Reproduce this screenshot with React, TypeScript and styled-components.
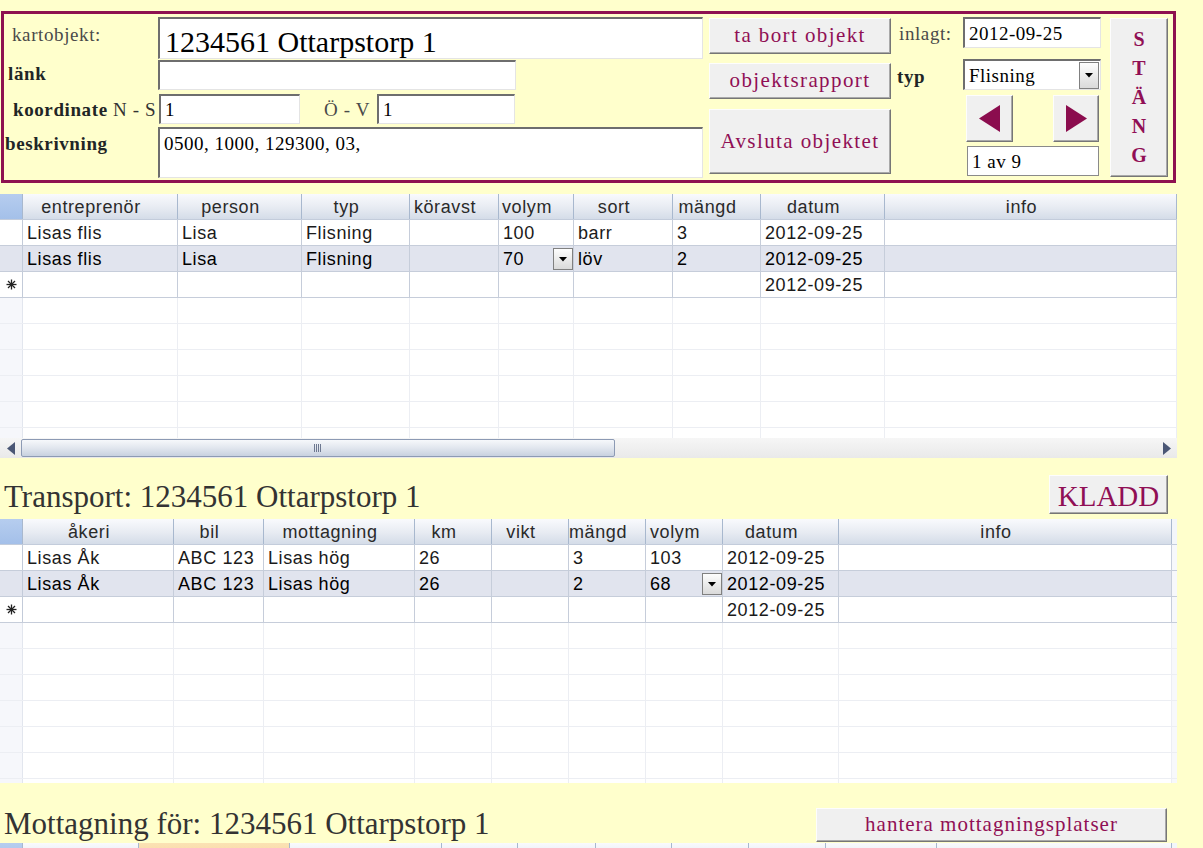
import React from "react";
import styled, { createGlobalStyle } from "styled-components";

const MAROON = "#8e1150";
const INK = "#900f55";
const SANS = `"Liberation Sans", Arial, sans-serif`;
const SERIF = `"Liberation Serif", "Times New Roman", serif`;

const GlobalStyle = createGlobalStyle`
  html, body {
    margin: 0;
    padding: 0;
    background: #ffffcc;
    overflow: hidden;
  }
  body {
    font-family: ${SERIF};
  }
`;

const Page = styled.div`
  width: 1203px;
  height: 848px;
  box-sizing: border-box;
  padding-top: 11px;
  overflow: hidden;
`;

/* ---------- top form ---------- */

const Panel = styled.div`
  display: flex;
  width: 1175px;
  height: 172px;
  margin-left: 1px;
  box-sizing: border-box;
  border: 3px solid ${MAROON};
`;

const MainCol = styled.div`
  display: flex;
  flex-direction: column;
  width: 699px;
  padding-top: 3px;
`;

const ButtonCol = styled.div`
  display: flex;
  flex-direction: column;
  width: 182px;
  margin-left: 6px;
`;

const SideCol = styled.div`
  display: flex;
  flex-direction: column;
  width: 204px;
  margin-left: 6px;
`;

const FieldRow = styled.div<{ $h: number; $mt: number }>`
  display: flex;
  height: ${(p) => p.$h}px;
  margin-top: ${(p) => p.$mt}px;
`;

const Label = styled.div<{
  $w: number;
  $pl?: number;
  $pt?: number;
  $bold?: boolean;
  $muted?: boolean;
  $right?: boolean;
}>`
  flex-shrink: 0;
  width: ${(p) => p.$w}px;
  box-sizing: border-box;
  padding-left: ${(p) => p.$pl ?? 0}px;
  padding-top: ${(p) => p.$pt ?? 0}px;
  padding-right: ${(p) => (p.$right ? 7 : 0)}px;
  text-align: ${(p) => (p.$right ? "right" : "left")};
  font-size: 19px;
  line-height: 21px;
  letter-spacing: 0.6px;
  font-weight: ${(p) => (p.$bold ? 700 : 400)};
  color: ${(p) => (p.$muted ? "#4a4a4a" : "#1f2626")};
  white-space: nowrap;
`;

const Plain = styled.span`
  font-weight: 400;
  color: #333;
`;

const Sunken = styled.div<{
  $w: number;
  $size?: number;
  $pt?: number;
  $top?: boolean;
  $flat?: boolean;
  $ml?: number;
}>`
  display: flex;
  align-items: ${(p) => (p.$top ? "flex-start" : "center")};
  justify-content: space-between;
  flex-shrink: 0;
  width: ${(p) => p.$w}px;
  height: 100%;
  margin-left: ${(p) => p.$ml ?? 0}px;
  box-sizing: border-box;
  padding: ${(p) => p.$pt ?? 0}px 1px 0 ${(p) => (p.$size ? 5 : 4)}px;
  background: #fff;
  border-style: solid;
  border-width: ${(p) => (p.$flat ? "1px" : "2px 1px 1px 2px")};
  border-color: ${(p) =>
    p.$flat ? "#8a8a8a" : "#6e6e6e #e4e4e4 #e4e4e4 #6e6e6e"};
  color: #000;
  font-size: ${(p) => p.$size ?? 19}px;
  line-height: ${(p) => (p.$size ? p.$size + 3 : 21)}px;
  letter-spacing: ${(p) => (p.$size ? 0 : 0.5)}px;
  white-space: nowrap;
  overflow: hidden;
`;

const Raised = styled.button<{
  $w?: number;
  $h: number;
  $mt?: number;
  $ml?: number;
  $size?: number;
  $track?: number;
  $pt?: number;
}>`
  display: flex;
  align-items: center;
  justify-content: center;
  flex-shrink: 0;
  width: ${(p) => (p.$w ? `${p.$w}px` : "100%")};
  height: ${(p) => p.$h}px;
  margin-top: ${(p) => p.$mt ?? 0}px;
  margin-left: ${(p) => p.$ml ?? 0}px;
  box-sizing: border-box;
  padding: ${(p) => p.$pt ?? 0}px 0 0 0;
  background: #f0f0f0;
  border: 1px solid;
  border-color: #fdfdfd #767676 #767676 #fdfdfd;
  box-shadow: inset -1px -1px 0 #a9a9a9;
  color: ${INK};
  font-family: ${SERIF};
  font-size: ${(p) => p.$size ?? 21}px;
  letter-spacing: ${(p) => p.$track ?? 1.4}px;
  line-height: 1.1;
  white-space: nowrap;
  cursor: pointer;
`;

const StackLetters = styled.span`
  display: flex;
  flex-direction: column;
  align-items: center;
  font-size: 20px;
  font-weight: 700;
  line-height: 29px;
  letter-spacing: 0;
`;

const NavRow = styled.div`
  display: flex;
  height: 47px;
  margin-top: 5px;
  padding-left: 69px;
  gap: 40px;
`;

const Spacer = styled.div<{ $w: number }>`
  flex-shrink: 0;
  width: ${(p) => p.$w}px;
`;

const DropBtn = styled.span<{ $w: number; $h: number }>`
  display: flex;
  align-items: center;
  justify-content: center;
  flex-shrink: 0;
  width: ${(p) => p.$w}px;
  height: ${(p) => p.$h}px;
  box-sizing: border-box;
  border: 1px solid #808080;
  background: linear-gradient(#fdfdfd, #dadada);
`;

const DropArrow = () => (
  <svg width="8" height="5" viewBox="0 0 8 5">
    <polygon points="0,0 8,0 4,4.5" fill="#000" />
  </svg>
);

const Triangle = ({ dir }: { dir: "left" | "right" }) => (
  <svg width="21" height="27" viewBox="0 0 21 27">
    <polygon
      points={dir === "left" ? "21,0 21,27 0,13.5" : "0,0 0,27 21,13.5"}
      fill="#8b0d4e"
    />
  </svg>
);

/* ---------- data grids ---------- */

type Col = { label: string; w: number; tone?: "orange" };
type RowData = { cells: string[]; current?: boolean; isNew?: boolean; combo?: number };

const Grid = styled.div`
  width: 1177px;
  background: #fff;
  font-family: ${SANS};
  font-size: 18px;
  letter-spacing: 0.6px;
`;

const HeadRow = styled.div`
  display: flex;
  height: 26px;
  box-sizing: border-box;
  border-bottom: 1px solid #c3ccdb;
  background: linear-gradient(#f9fafd, #e7ebf2 55%, #d4dce8);
`;

const HeadCell = styled.div<{ $w: number; $tone?: "corner" | "orange" | "tail" }>`
  flex-shrink: 0;
  width: ${(p) => p.$w}px;
  box-sizing: border-box;
  padding-top: 1px;
  padding-right: ${(p) => (p.$tone === "corner" || p.$tone === "tail" ? 0 : 18)}px;
  border-right: ${(p) => (p.$tone === "tail" ? "none" : "1px solid #a8b8ce")};
  background: ${(p) =>
    p.$tone === "corner"
      ? "linear-gradient(#b6cdef, #a4c0e9)"
      : p.$tone === "orange"
      ? "linear-gradient(#fbe2b4, #f8d39a)"
      : p.$tone === "tail"
      ? "#f3f6fa"
      : "transparent"};
  color: #2a2a2a;
  text-align: center;
  line-height: 24px;
  white-space: nowrap;
  overflow: hidden;
`;

const Body = styled.div<{ $h: number }>`
  height: ${(p) => p.$h}px;
  overflow: hidden;
`;

const Row = styled.div<{ $current?: boolean; $filler?: boolean }>`
  display: flex;
  height: 26px;
  box-sizing: border-box;
  border-bottom: 1px solid ${(p) => (p.$filler ? "#eceef3" : "#c6cdda")};
  background: ${(p) => (p.$current ? "#e1e4ee" : "#fff")};
  color: ${(p) => (p.$current ? "#000" : "#1a1a1a")};
`;

const Selector = styled.div<{ $filler?: boolean }>`
  display: flex;
  align-items: center;
  justify-content: center;
  flex-shrink: 0;
  width: 23px;
  box-sizing: border-box;
  border-right: 1px solid ${(p) => (p.$filler ? "#e2e6ee" : "#c3cbd9")};
  background: ${(p) => (p.$filler ? "#f6f7fb" : "transparent")};
`;

const Cell = styled.div<{ $w: number; $filler?: boolean }>`
  display: flex;
  align-items: center;
  justify-content: space-between;
  flex-shrink: 0;
  width: ${(p) => p.$w}px;
  box-sizing: border-box;
  padding-left: 4px;
  border-right: 1px solid ${(p) => (p.$filler ? "#eceef3" : "#c6cdda")};
  line-height: 25px;
  white-space: nowrap;
  overflow: hidden;

  & > span {
    padding-top: 2px;
  }
`;

const Tail = styled.div<{ $w: number }>`
  flex-shrink: 0;
  width: ${(p) => p.$w}px;
  background: #f7f8fb;
`;

const HScroll = styled.div`
  display: flex;
  align-items: center;
  height: 20px;
  background: linear-gradient(#f6f6f6, #e9e9e9);
`;

const ScrollArrow = styled.div`
  display: flex;
  align-items: center;
  justify-content: center;
  flex-shrink: 0;
  width: 21px;
  height: 20px;
`;

const Thumb = styled.div`
  display: flex;
  align-items: center;
  justify-content: center;
  flex-shrink: 0;
  width: 594px;
  height: 18px;
  box-sizing: border-box;
  border: 1px solid #8c9ab4;
  border-radius: 2px;
  background: linear-gradient(#f6f8fb, #e1e6ee 50%, #c8d1df);
`;

const Fill = styled.div`
  flex: 1;
`;

const Asterisk = () => (
  <svg width="11" height="11" viewBox="0 0 11 11" stroke="#222" strokeWidth="1.3">
    <line x1="5.5" y1="0.5" x2="5.5" y2="10.5" />
    <line x1="0.5" y1="5.5" x2="10.5" y2="5.5" />
    <line x1="2" y1="2" x2="9" y2="9" />
    <line x1="9" y1="2" x2="2" y2="9" />
  </svg>
);

const ScrollBar = () => (
  <HScroll>
    <ScrollArrow>
      <svg width="8" height="13" viewBox="0 0 8 13">
        <polygon points="8,0 8,13 0,6.5" fill="#4b5775" />
      </svg>
    </ScrollArrow>
    <Thumb>
      <svg width="8" height="8" viewBox="0 0 8 8" stroke="#6d7890" strokeWidth="1">
        <line x1="0.5" y1="0" x2="0.5" y2="8" />
        <line x1="2.5" y1="0" x2="2.5" y2="8" />
        <line x1="4.5" y1="0" x2="4.5" y2="8" />
        <line x1="6.5" y1="0" x2="6.5" y2="8" />
      </svg>
    </Thumb>
    <Fill />
    <ScrollArrow>
      <svg width="8" height="13" viewBox="0 0 8 13">
        <polygon points="0,0 0,13 8,6.5" fill="#4b5775" />
      </svg>
    </ScrollArrow>
  </HScroll>
);

const DataGrid = ({
  cols,
  rows = [],
  bodyHeight,
  tail = 0,
  scroll = false,
}: {
  cols: Col[];
  rows?: RowData[];
  bodyHeight?: number;
  tail?: number;
  scroll?: boolean;
}) => (
  <Grid>
    <HeadRow>
      <HeadCell $w={23} $tone="corner" />
      {cols.map((c, i) => (
        <HeadCell key={i} $w={c.w} $tone={c.tone}>
          {c.label}
        </HeadCell>
      ))}
      {tail > 0 && <HeadCell $w={tail} $tone="tail" />}
    </HeadRow>
    {bodyHeight !== undefined && (
      <Body $h={bodyHeight}>
        {rows.map((r, ri) => (
          <Row key={ri} $current={r.current}>
            <Selector>{r.isNew && <Asterisk />}</Selector>
            {cols.map((c, ci) => (
              <Cell key={ci} $w={c.w}>
                <span>{r.cells[ci]}</span>
                {r.combo === ci && (
                  <DropBtn $w={20} $h={22}>
                    <DropArrow />
                  </DropBtn>
                )}
              </Cell>
            ))}
            {tail > 0 && <Tail $w={tail} />}
          </Row>
        ))}
        {Array.from({ length: 8 }).map((_, fi) => (
          <Row key={`f${fi}`} $filler>
            <Selector $filler />
            {cols.map((c, ci) => (
              <Cell key={ci} $w={c.w} $filler />
            ))}
            {tail > 0 && <Tail $w={tail} />}
          </Row>
        ))}
      </Body>
    )}
    {scroll && <ScrollBar />}
  </Grid>
);

/* ---------- sections between grids ---------- */

const SectionBar = styled.div<{ $h: number }>`
  display: flex;
  align-items: flex-end;
  justify-content: space-between;
  height: ${(p) => p.$h}px;
`;

const SectionTitle = styled.h2<{ $mb: number }>`
  margin: 0 0 ${(p) => p.$mb}px 4px;
  font-family: ${SERIF};
  font-size: 31px;
  font-weight: 400;
  line-height: 31px;
  color: #333;
  white-space: nowrap;
`;

/* ---------- data ---------- */

const fellingCols: Col[] = [
  { label: "entreprenör", w: 155 },
  { label: "person", w: 124 },
  { label: "typ", w: 108 },
  { label: "köravst", w: 89 },
  { label: "volym", w: 75 },
  { label: "sort", w: 99 },
  { label: "mängd", w: 88 },
  { label: "datum", w: 124 },
  { label: "info", w: 292 },
];

const fellingRows: RowData[] = [
  { cells: ["Lisas flis", "Lisa", "Flisning", "", "100", "barr", "3", "2012-09-25", ""] },
  {
    cells: ["Lisas flis", "Lisa", "Flisning", "", "70", "löv", "2", "2012-09-25", ""],
    current: true,
    combo: 4,
  },
  { cells: ["", "", "", "", "", "", "", "2012-09-25", ""], isNew: true },
];

const transportCols: Col[] = [
  { label: "åkeri", w: 151 },
  { label: "bil", w: 90 },
  { label: "mottagning", w: 151 },
  { label: "km", w: 77 },
  { label: "vikt", w: 77 },
  { label: "mängd", w: 77 },
  { label: "volym", w: 77 },
  { label: "datum", w: 116 },
  { label: "info", w: 333 },
];

const transportRows: RowData[] = [
  { cells: ["Lisas Åk", "ABC 123", "Lisas hög", "26", "", "3", "103", "2012-09-25", ""] },
  {
    cells: ["Lisas Åk", "ABC 123", "Lisas hög", "26", "", "2", "68", "2012-09-25", ""],
    current: true,
    combo: 6,
  },
  { cells: ["", "", "", "", "", "", "", "2012-09-25", ""], isNew: true },
];

const receivingCols: Col[] = [
  { label: "", w: 116 },
  { label: "", w: 151, tone: "orange" },
  { label: "", w: 152 },
  { label: "", w: 76 },
  { label: "", w: 78 },
  { label: "", w: 76 },
  { label: "", w: 77 },
  { label: "", w: 77 },
  { label: "", w: 111 },
  { label: "", w: 235 },
];

export const App = () => {
  return (
    <Page>
      <GlobalStyle />
      <Panel>
        <MainCol>
          <FieldRow $h={42} $mt={0}>
            <Label $w={154} $pl={8} $pt={7} $muted>
              kartobjekt:
            </Label>
            <Sunken $w={545} $size={30} $pt={6}>
              1234561 Ottarpstorp 1
            </Sunken>
          </FieldRow>
          <FieldRow $h={30} $mt={1}>
            <Label $w={154} $pl={4} $pt={3} $bold>
              länk
            </Label>
            <Sunken $w={358} />
          </FieldRow>
          <FieldRow $h={30} $mt={4}>
            <Label $w={155} $pl={9} $pt={5} $bold>
              koordinate <Plain>N - S</Plain>
            </Label>
            <Sunken $w={141}>1</Sunken>
            <Label $w={77} $pt={5} $right $muted>
              Ö - V
            </Label>
            <Sunken $w={138}>1</Sunken>
          </FieldRow>
          <FieldRow $h={51} $mt={3}>
            <Label $w={154} $pl={1} $pt={6} $bold>
              beskrivning
            </Label>
            <Sunken $w={545} $top $pt={4}>
              0500, 1000, 129300, 03,
            </Sunken>
          </FieldRow>
        </MainCol>

        <ButtonCol>
          <Raised $h={36} $mt={4}>ta bort objekt</Raised>
          <Raised $h={36} $mt={9}>objektsrapport</Raised>
          <Raised $h={65} $mt={10}>Avsluta objektet</Raised>
        </ButtonCol>

        <SideCol>
          <FieldRow $h={31} $mt={3}>
            <Label $w={66} $pl={2} $pt={6} $muted>
              inlagt:
            </Label>
            <Sunken $w={138}>2012-09-25</Sunken>
          </FieldRow>
          <FieldRow $h={31} $mt={11}>
            <Label $w={66} $pt={7} $bold>
              typ
            </Label>
            <Sunken $w={138}>
              Flisning
              <DropBtn $w={20} $h={27}>
                <DropArrow />
              </DropBtn>
            </Sunken>
          </FieldRow>
          <NavRow>
            <Raised $w={47} $h={47}>
              <Triangle dir="left" />
            </Raised>
            <Raised $w={46} $h={47}>
              <Triangle dir="right" />
            </Raised>
          </NavRow>
          <FieldRow $h={30} $mt={4}>
            <Spacer $w={70} />
            <Sunken $w={132} $flat>
              1 av 9
            </Sunken>
          </FieldRow>
        </SideCol>

        <Raised $w={58} $h={159} $mt={4} $ml={9}>
          <StackLetters>
            <span>S</span>
            <span>T</span>
            <span>Ä</span>
            <span>N</span>
            <span>G</span>
          </StackLetters>
        </Raised>
      </Panel>

      <div style={{ height: 11 }} />
      <DataGrid cols={fellingCols} rows={fellingRows} bodyHeight={218} scroll />

      <SectionBar $h={61}>
        <SectionTitle $mb={7}>Transport: 1234561 Ottarpstorp 1</SectionTitle>
        <Raised
          $w={119}
          $h={39}
          $size={29}
          $track={0}
          $pt={5}
          style={{ marginRight: 35, marginBottom: 5 }}
        >
          KLADD
        </Raised>
      </SectionBar>

      <DataGrid cols={transportCols} rows={transportRows} bodyHeight={238} tail={5} />

      <SectionBar $h={60}>
        <SectionTitle $mb={4}>Mottagning för: 1234561 Ottarpstorp 1</SectionTitle>
        <Raised $w={351} $h={34} $track={1} style={{ marginRight: 36, marginBottom: 1 }}>
          hantera mottagningsplatser
        </Raised>
      </SectionBar>

      <DataGrid cols={receivingCols} tail={5} />
    </Page>
  );
};

export default App;
